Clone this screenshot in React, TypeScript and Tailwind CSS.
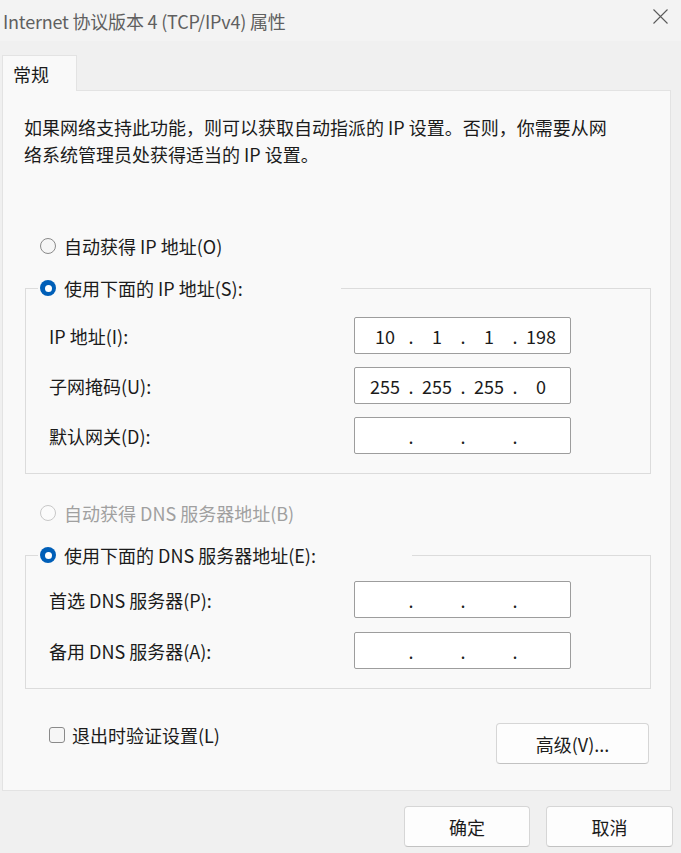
import React from 'react';

type Octets = [string, string, string, string];

const RadioDot: React.FC<{ checked?: boolean; disabled?: boolean }> = ({ checked, disabled }) => {
  if (checked) {
    return (
      <span className="flex h-[16px] w-[16px] shrink-0 items-center justify-center rounded-full bg-[#005fb8]">
        <span className="h-[7px] w-[7px] rounded-full bg-white" />
      </span>
    );
  }
  return (
    <span
      className={
        disabled
          ? 'h-[16px] w-[16px] shrink-0 rounded-full border border-[#c8c8c8] bg-[#fbfbfb]'
          : 'h-[16px] w-[16px] shrink-0 rounded-full border border-[#8a8a8a] bg-[#f6f6f6]'
      }
    />
  );
};

const Radio: React.FC<{ label: string; checked?: boolean; disabled?: boolean }> = ({ label, checked, disabled }) => (
  <div className="flex h-[24px] items-center gap-[8px]">
    <RadioDot checked={checked} disabled={disabled} />
    <span className={disabled ? 'text-[#a0a0a0]' : 'text-[#1b1b1b]'}>{label}</span>
  </div>
);

// four-octet address box, dots sit between fixed-width cells
const IpBox: React.FC<{ value?: Octets }> = ({ value = ['', '', '', ''] }) => (
  <div className="flex h-[37px] w-[217px] items-center rounded-[2px] border border-[#9d9d9d] bg-white pl-[8px] text-[#1b1b1b]">
    {value.map((v, i) => (
      <React.Fragment key={i}>
        {i > 0 && <span className="w-[8px] text-center">.</span>}
        <span className="w-[44px] text-center">{v}</span>
      </React.Fragment>
    ))}
  </div>
);

const FieldRow: React.FC<{ label: string; value?: Octets }> = ({ label, value }) => (
  <div className="flex items-center">
    <span className="w-[305px] text-[#1b1b1b]">{label}</span>
    <IpBox value={value} />
  </div>
);

const Button: React.FC<{ label: string; className?: string }> = ({ label, className }) => (
  <button
    className={`flex h-[41px] items-center justify-center rounded-[4px] border border-[#d6d6d6] border-b-[#c2c2c2] bg-[#fdfdfd] text-[#1b1b1b] ${className ?? ''}`}
  >
    {label}
  </button>
);

const App: React.FC = () => {
  return (
    <div
      className="flex h-[853px] w-[681px] flex-col bg-[#f0f0f0] text-[18px] leading-[24px]"
      style={{ fontFamily: '"Noto Sans CJK SC", "Noto Sans", sans-serif' }}
    >
      {/* title bar */}
      <div className="flex h-[41px] shrink-0 items-center justify-between bg-[#f3f3f3] pl-[3px] pr-[13px]">
        <span className="tracking-[-0.2px] text-[#5f5f5f]">Internet 协议版本 4 (TCP/IPv4) 属性</span>
        <svg width="15" height="15" viewBox="0 0 15 15" className="mb-[9px]">
          <path d="M0.5 0.5 L14.5 14.5 M14.5 0.5 L0.5 14.5" stroke="#5a5a5a" strokeWidth="1.1" fill="none" />
        </svg>
      </div>

      <div className="px-[2px] pt-[14px]">
        {/* tab strip */}
        <div className="relative z-10 -mb-px flex h-[36px] w-[75px] items-center border border-b-0 border-[#e3e3e3] bg-[#f9f9f9] pl-[10px] text-[#1b1b1b]">
          常规
        </div>

        <div className="h-[701px] w-[669px] border border-[#e3e3e3] bg-[#f9f9f9] pt-[23px]">
          <p className="pl-[21px] leading-[27px] text-[#1b1b1b]">
            如果网络支持此功能，则可以获取自动指派的 IP 设置。否则，你需要从网
            <br />
            络系统管理员处获得适当的 IP 设置。
          </p>

          <div className="w-[648px] pl-[22px]">
            <div className="mt-[66px] pl-[15px]">
              <Radio label="自动获得 IP 地址(O)" />
            </div>

            <fieldset className="mt-[18px] w-[626px] border border-[#dcdcdc] px-0 pb-[19px] pt-[17px]">
              <legend className="ml-[12px] w-[303px] pl-[2px]">
                <Radio label="使用下面的 IP 地址(S):" checked />
              </legend>
              <div className="flex flex-col gap-[13px] pl-[23px]">
                <FieldRow label="IP 地址(I):" value={['10', '1', '1', '198']} />
                <FieldRow label="子网掩码(U):" value={['255', '255', '255', '0']} />
                <FieldRow label="默认网关(D):" />
              </div>
            </fieldset>

            <div className="mt-[27px] pl-[15px]">
              <Radio label="自动获得 DNS 服务器地址(B)" disabled />
            </div>

            <fieldset className="mt-[18px] w-[626px] border border-[#dcdcdc] px-0 pb-[19px] pt-[14px]">
              <legend className="ml-[12px] w-[374px] pl-[2px]">
                <Radio label="使用下面的 DNS 服务器地址(E):" checked />
              </legend>
              <div className="flex flex-col gap-[14px] pl-[23px]">
                <FieldRow label="首选 DNS 服务器(P):" />
                <FieldRow label="备用 DNS 服务器(A):" />
              </div>
            </fieldset>

            <div className="mt-[34px] flex w-[626px] items-start justify-between pr-[2px]">
              <div className="flex h-[24px] items-center gap-[7px] pl-[24px]">
                <span className="h-[16px] w-[16px] rounded-[3px] border border-[#8a8a8a] bg-[#f6f6f6]" />
                <span className="text-[#1b1b1b]">退出时验证设置(L)</span>
              </div>
              <Button label="高级(V)..." className="w-[153px]" />
            </div>
          </div>
        </div>
      </div>

      {/* dialog buttons */}
      <div className="flex justify-end gap-[16px] pr-[8px] pt-[15px]">
        <Button label="确定" className="w-[126px]" />
        <Button label="取消" className="w-[127px]" />
      </div>
    </div>
  );
};

export default App;
